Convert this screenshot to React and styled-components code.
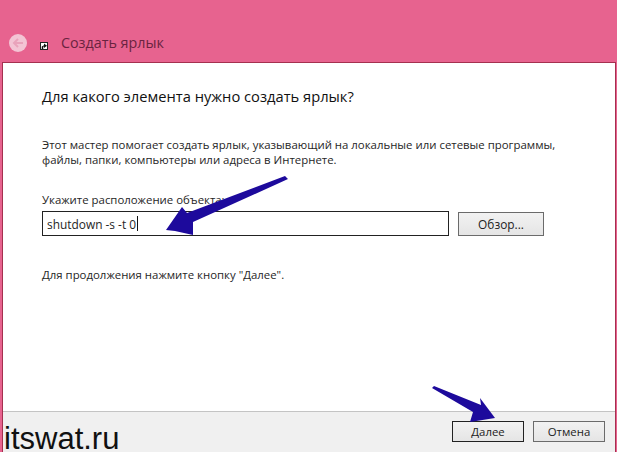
import React from 'react'
import styled, { createGlobalStyle } from 'styled-components'

const Global = createGlobalStyle`
  html, body { margin: 0; padding: 0; }
  body { width: 617px; height: 452px; overflow: hidden; background: #e7638f; font-family: "Open Sans", "Noto Sans", sans-serif; }
`

const Wizard = () => {
  return (
    <Ventana>
      <Global />
      <TitleBar>
        <BackButton>
          <svg width="18" height="18" viewBox="0 0 18 18">
            <path d="M14 9H5M9 5L5 9l4 4" fill="none" stroke="#e9a3bb" strokeWidth="2" />
          </svg>
        </BackButton>
        <ShortcutIcon>
          <svg width="6" height="6" viewBox="0 0 8 8">
            <path d="M1 8V4.500L4 3V0.500L8 3.500 4 6.500V4.500L3 5V8z" fill="#111" />
          </svg>
        </ShortcutIcon>
        <WindowTitle>Создать ярлык</WindowTitle>
      </TitleBar>
      <Panel>
        <Content>
          <Heading>Для какого элемента нужно создать ярлык?</Heading>
          <Description>
            Этот мастер помогает создать ярлык, указывающий на локальные или сетевые программы,
            <br />
            файлы, папки, компьютеры или адреса в Интернете.
          </Description>
          <FieldLabel>Укажите расположение объекта:</FieldLabel>
          <FieldRow>
            <PathInput>
              shutdown -s -t 0<Caret />
            </PathInput>
            <BrowseButton>Обзор...</BrowseButton>
          </FieldRow>
          <Hint>Для продолжения нажмите кнопку "Далее".</Hint>
        </Content>
        <Footer>
          <Button primary>Далее</Button>
          <Button>Отмена</Button>
        </Footer>
      </Panel>
      <Arrows width="617" height="452" viewBox="0 0 617 452">
        <path
          d="M285 176L288 179L193 222L193 235L175 231L166 230L182 207L187 213Z"
          fill="#1d0a9c"
        />
        <path
          d="M432 388L434 386L481 405L480 398L495 418L470 422L473 412Z"
          fill="#1d0a9c"
        />
      </Arrows>
      <Watermark>itswat.ru</Watermark>
    </Ventana>
  )
}

const Ventana = styled.div`
  position: relative;
  width: 617px;
  height: 452px;
  display: flex;
  flex-direction: column;
  overflow: hidden;
`
const TitleBar = styled.div`
  height: 63px;
  box-sizing: border-box;
  padding: 34px 0 0 9px;
  display: flex;
  align-items: flex-start;
`
const BackButton = styled.div`
  width: 18px;
  height: 18px;
  border-radius: 50%;
  background: #f3c4d4;
`
const ShortcutIcon = styled.div`
  width: 8px;
  height: 8px;
  box-sizing: border-box;
  margin: 8px 0 0 13px;
  background: #fff;
  border: 1px solid #222;
  display: flex;
`
const WindowTitle = styled.div`
  margin: 0 0 0 13px;
  font-size: 14.300px;
  line-height: 18px;
  color: #6a2340;
`
const Panel = styled.div`
  flex: 1;
  margin: 0 2px 0 3px;
  background: #fff;
  box-shadow: 0 0 0 1px #a5304f;
  display: flex;
  flex-direction: column;
`
const Content = styled.div`
  flex: 1;
  padding: 23px 0 0 39px;
  color: #262626;
`
const Heading = styled.div`
  font-size: 14.700px;
  line-height: 20px;
  color: #111;
`
const Description = styled.div`
  margin-top: 31px;
  font-size: 11.400px;
  line-height: 15px;
  white-space: nowrap;
`
const FieldLabel = styled.div`
  margin-top: 25px;
  font-size: 11.400px;
  line-height: 16px;
`
const FieldRow = styled.div`
  display: flex;
  align-items: center;
  margin-top: 3px;
  gap: 9px;
`
const PathInput = styled.div`
  width: 407px;
  height: 25px;
  box-sizing: border-box;
  border: 1px solid #222;
  padding: 0 4px;
  display: flex;
  align-items: center;
  font-size: 11.900px;
`
const Caret = styled.span`
  width: 1px;
  height: 15px;
  margin-left: 1px;
  background: #111;
`
const BrowseButton = styled.div`
  width: 86px;
  height: 24px;
  box-sizing: border-box;
  border: 1px solid #6b6b6b;
  background: linear-gradient(#f2f2f2, #e5e5e5);
  display: flex;
  align-items: center;
  justify-content: center;
  font-size: 11.900px;
  color: #222;
`
const Hint = styled.div`
  margin-top: 31px;
  font-size: 11.400px;
  line-height: 16px;
`
const Footer = styled.div`
  height: 41px;
  box-sizing: border-box;
  border-top: 1px solid #c4c4c4;
  background: #f0f0f0;
  display: flex;
  justify-content: flex-end;
  gap: 9px;
  padding: 9px 10px 0 0;
`
const Button = styled.div`
  width: 72px;
  height: 21px;
  box-sizing: border-box;
  border: 1px solid ${props => (props.primary ? '#222' : '#6b6b6b')};
  background: linear-gradient(#f2f2f2, #e5e5e5);
  display: flex;
  align-items: center;
  justify-content: center;
  font-size: 11.400px;
  color: #222;
`
const Arrows = styled.svg`
  position: absolute;
  top: 0;
  left: 0;
  pointer-events: none;
`
const Watermark = styled.div`
  position: absolute;
  left: 4px;
  bottom: 0;
  font-family: "Liberation Sans", Arial, sans-serif;
  font-size: 31px;
  line-height: 27px;
  color: #111;
`

export default Wizard
